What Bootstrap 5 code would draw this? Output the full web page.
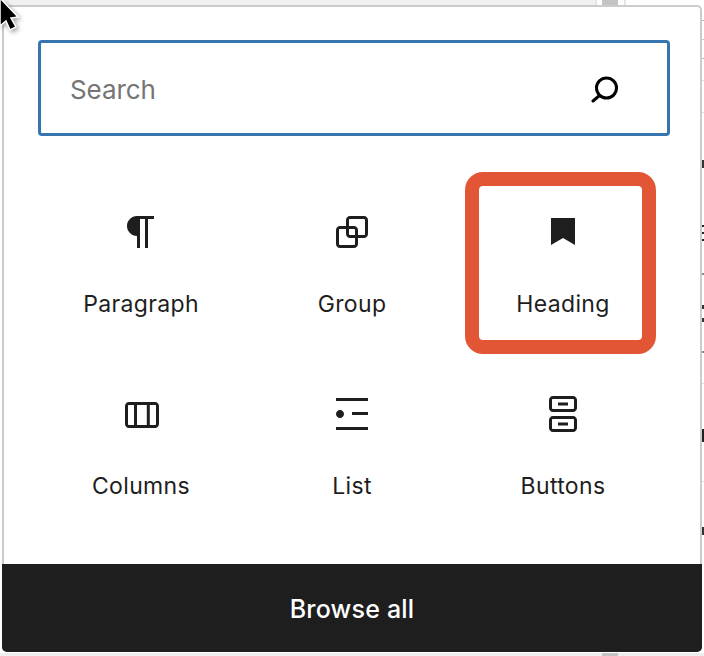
<!DOCTYPE html>
<html lang="en">
<head>
<meta charset="utf-8">
<title>Block inserter</title>
<link rel="stylesheet" href="https://cdn.jsdelivr.net/npm/bootstrap@5.3.0/dist/css/bootstrap.min.css">
<style>
html, body { height: 100%; }
body { background: #fff; font-family: Inter, "Liberation Sans", sans-serif; color: #1e1e1e; overflow: hidden; }
.stage { height: 656px; width: 704px; padding: 5px 2px 4px 2px; position: relative;
  background:
    linear-gradient(#c4c4c4,#c4c4c4) 602px 0/16px 6px no-repeat,
    linear-gradient(#c4c4c4,#c4c4c4) 602px 653px/16px 3px no-repeat,
    linear-gradient(#e4e4e4,#e4e4e4) 595px 0/2px 6px no-repeat,
    linear-gradient(#e4e4e4,#e4e4e4) 624px 0/2px 6px no-repeat,
    linear-gradient(#f1f1f1,#f1f1f1) 0 0/595px 6px no-repeat,
    linear-gradient(#eee,#eee) 0 653px/704px 3px no-repeat,
    linear-gradient(#bbb,#bbb) 702px 20px/2px 1px no-repeat,
    linear-gradient(#ccc,#ccc) 702px 39px/2px 1px no-repeat,
    linear-gradient(#bbb,#bbb) 702px 58px/2px 1px no-repeat,
    linear-gradient(#ddd,#ddd) 702px 80px/2px 1px no-repeat,
    linear-gradient(#ddd,#ddd) 702px 112px/2px 1px no-repeat,
    linear-gradient(#333,#333) 702px 160px/2px 8px no-repeat,
    linear-gradient(#222,#222) 702px 225px/2px 2px no-repeat,
    linear-gradient(#222,#222) 702px 232px/2px 2px no-repeat,
    linear-gradient(#222,#222) 702px 239px/2px 2px no-repeat,
    linear-gradient(#888,#888) 702px 273px/2px 2px no-repeat,
    linear-gradient(#333,#333) 702px 305px/2px 4px no-repeat,
    linear-gradient(#333,#333) 702px 318px/2px 4px no-repeat,
    linear-gradient(#888,#888) 702px 351px/2px 2px no-repeat,
    linear-gradient(#ddd,#ddd) 702px 383px/2px 1px no-repeat,
    linear-gradient(#222,#222) 702px 429px/2px 13px no-repeat,
    linear-gradient(#ddd,#ddd) 702px 481px/2px 1px no-repeat,
    linear-gradient(#333,#333) 702px 527px/2px 8px no-repeat,
    #fff; }
.popup { height: 647px; background: #fff; border: 2px solid #ccc; border-radius: 5px; }
.search-box { height: 96px; margin: 33px 30px 0 34px; border: 3px solid #3575b0; border-radius: 4px; padding: 2px 47px 0 29px; }
.search-ph { font-size: 26px; letter-spacing: -.1px; color: #757575; }
.block-grid { display: grid; grid-template-columns: repeat(3, 211px); grid-auto-rows: 182px; margin: 36px 0 0 31px; }
.block-cell { position: relative; padding-top: 36px; }
.block-label { font-size: 23px; letter-spacing: .35px; line-height: 28px; margin-top: 34px; padding-left: 1px; }
.highlight { position: absolute; left: 8px; top: 0; width: 191px; height: 182px; border: 14px solid #e35635; border-radius: 18px; pointer-events: none; }
.browse { height: 88px; margin: 0 -2px -2px; padding-top: 3px; background: #1e1e1e; color: #fff; font-size: 25px; letter-spacing: .2px; font-weight: 500; border-radius: 0 0 5px 5px; }
.cursor { position: absolute; left: 0; top: 0; filter: drop-shadow(2px 2px 2px rgba(0,0,0,.35)); }
</style>
</head>
<body>
<div class="stage">
  <div class="popup d-flex flex-column">
    <div class="search-box d-flex align-items-center justify-content-between">
      <span class="search-ph">Search</span>
      <svg width="30" height="28" viewBox="0 0 30 28" fill="none" stroke="#000" stroke-width="3"><circle cx="16.5" cy="13" r="10"/><path d="M9.5 20.5 3 26" stroke-linecap="round"/></svg>
    </div>
    <div class="block-grid flex-grow-1 text-center">
      <div class="block-cell">
        <svg class="d-block mx-auto" width="48" height="48" viewBox="0 0 24 24" fill="#1e1e1e"><path d="m9.99609 14v-.2251l.00391.0001v6.225h1.5v-14.5h2.5v14.5h1.5v-14.5h3v-1.5h-8.50391c-2.76142 0-5 2.23858-5 5 0 2.7614 2.23858 5 5 5z"/></svg>
        <div class="block-label">Paragraph</div>
      </div>
      <div class="block-cell">
        <svg class="d-block mx-auto" width="48" height="48" viewBox="0 0 24 24" fill="#1e1e1e"><path d="M18 4h-7c-1.1 0-2 .9-2 2v3H6c-1.1 0-2 .9-2 2v7c0 1.1.9 2 2 2h7c1.1 0 2-.9 2-2v-3h3c1.1 0 2-.9 2-2V6c0-1.1-.9-2-2-2zm-4.5 14c0 .3-.2.5-.5.5H6c-.3 0-.5-.2-.5-.5v-7c0-.3.2-.5.5-.5h3V13c0 1.1.9 2 2 2h2.5v3zm0-4.5H11c-.3 0-.5-.2-.5-.5v-2.5H13c.3 0 .5.2.5.5v2.5zm5-.5c0 .3-.2.5-.5.5h-3V11c0-1.1-.9-2-2-2h-2.5V6c0-.3.2-.5.5-.5h7c.3 0 .5.2.5.5v7z"/></svg>
        <div class="block-label">Group</div>
      </div>
      <div class="block-cell">
        <svg class="d-block mx-auto" width="48" height="48" viewBox="0 0 24 24" fill="#1e1e1e"><path d="M6 5h12v13.5l-6-3.5-6 3.5z"/></svg>
        <div class="block-label">Heading</div>
        <div class="highlight"></div>
      </div>
      <div class="block-cell">
        <svg class="d-block mx-auto" width="48" height="48" viewBox="0 0 24 24" fill="#1e1e1e"><path d="M19 6H6c-1.1 0-2 .9-2 2v9c0 1.1.9 2 2 2h13c1.1 0 2-.9 2-2V8c0-1.1-.9-2-2-2zm-4.1 1.5v10H10v-10h4.9zM5.5 17V8c0-.3.2-.5.5-.5h2.5v10H6c-.3 0-.5-.2-.5-.5zm14 0c0 .3-.2.5-.5.5h-2.6v-10H19c.3 0 .5.2.5.5v9z"/></svg>
        <div class="block-label">Columns</div>
      </div>
      <div class="block-cell">
        <svg class="d-block mx-auto" width="48" height="48" viewBox="0 0 24 24" fill="#1e1e1e"><path d="M4 4v1.5h16V4H4zm8 8.5h8V11h-8v1.5zM4 20h16v-1.5H4V20zm4-8c0-1.1-.9-2-2-2s-2 .9-2 2 .9 2 2 2 2-.9 2-2z"/></svg>
        <div class="block-label">List</div>
      </div>
      <div class="block-cell">
        <svg class="d-block mx-auto" width="48" height="48" viewBox="0 0 24 24" fill="#1e1e1e"><path d="M17 3H7c-1.1 0-2 .9-2 2v4c0 1.1.9 2 2 2h10c1.1 0 2-.9 2-2V5c0-1.1-.9-2-2-2zm.5 6c0 .3-.2.5-.5.5H7c-.3 0-.5-.2-.5-.5V5c0-.3.2-.5.5-.5h10c.3 0 .5.2.5.5v4zm-8-1.2h5V6.2h-5v1.6zM17 13H7c-1.1 0-2 .9-2 2v4c0 1.1.9 2 2 2h10c1.1 0 2-.9 2-2v-4c0-1.1-.9-2-2-2zm.5 6c0 .3-.2.5-.5.5H7c-.3 0-.5-.2-.5-.5v-4c0-.3.2-.5.5-.5h10c.3 0 .5.2.5.5v4zm-8-1.2h5v-1.6h-5v1.6z"/></svg>
        <div class="block-label">Buttons</div>
      </div>
    </div>
    <div class="browse d-flex align-items-center justify-content-center">Browse all</div>
  </div>
  <svg class="cursor" width="26" height="36" viewBox="0 0 26 36"><path d="M0 -2 18 17 11 18 16 27 10 30 6 21 0 26z" fill="#000" stroke="#fff" stroke-width="1.5"/></svg>
</div>
<script src="https://cdn.jsdelivr.net/npm/bootstrap@5.3.0/dist/js/bootstrap.bundle.min.js"></script>
</body>
</html>
